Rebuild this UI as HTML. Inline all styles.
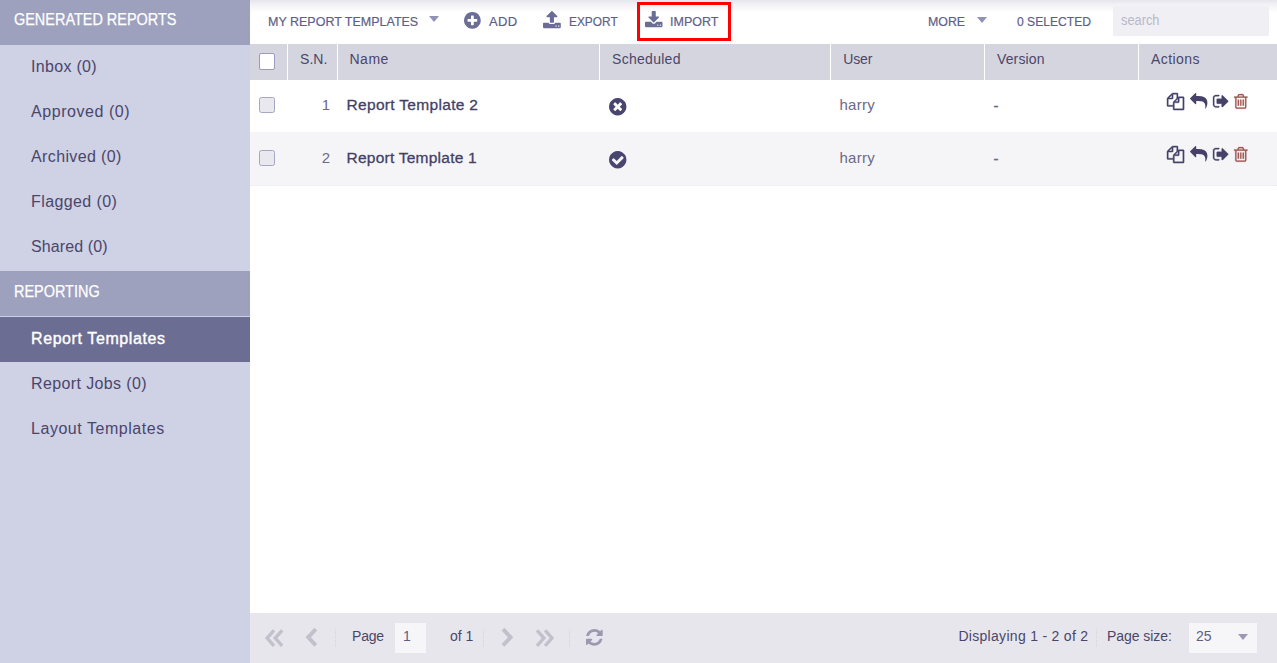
<!DOCTYPE html>
<html lang="en">
<head>
<meta charset="utf-8">
<title>Report Templates</title>
<style>
*{box-sizing:border-box;margin:0;padding:0}
html,body{width:1277px;height:663px;overflow:hidden;background:#fff}
body{font-family:"Liberation Sans",sans-serif;color:#454168;position:relative}
.abs{position:absolute;white-space:nowrap;line-height:1}
/* sidebar */
#side{position:absolute;left:0;top:0;width:250px;height:663px;background:#cfd1e5}
.shead{position:absolute;left:0;width:250px;background:#9ea1be;color:#fff;font-size:16px;-webkit-text-stroke:0.25px #fff}
.shead span{position:absolute;left:14px;white-space:nowrap;line-height:1;transform-origin:0 50%;transform:scaleX(0.903)}
.sitem{position:absolute;left:31px;font-size:16px;color:#4a466b;white-space:nowrap;line-height:1}
#sel{position:absolute;left:0;top:317px;width:250px;height:45px;background:#6b6d93}
/* toolbar */
#tbar{position:absolute;left:250px;top:0;width:1027px;height:44px;background:linear-gradient(#e5e5eb 0,#f3f3f7 5px,#fff 13px)}
.tb{transform-origin:0 50%;position:absolute;font-size:13px;color:#5d5f8a;-webkit-text-stroke:0.2px #5d5f8a;white-space:nowrap;line-height:1;top:14.5px}
.tri{position:absolute;width:0;height:0;border-left:5px solid transparent;border-right:5px solid transparent;border-top:6px solid #9092b6}
#redbox{position:absolute;left:637px;top:2px;width:94px;height:39px;border:3px solid #ff0000}
#search{position:absolute;left:1113px;top:6px;width:156px;height:30px;background:#f0eff4}
#search span{position:absolute;left:7.5px;top:6.7px;font-size:14px;color:#b8b8c9;line-height:1;transform-origin:0 50%;transform:scaleX(0.915)}
/* grid */
#ghead{position:absolute;left:250px;top:44px;width:1027px;height:36px;background:#d5d5df}
.div{position:absolute;top:44px;width:1px;height:36px;background:#fff}
.hc{position:absolute;top:52px;font-size:14px;color:#4a466b;white-space:nowrap;line-height:1}
.row{position:absolute;left:250px;width:1027px}
.cb{position:absolute;left:259px;width:16px;height:16px;border:1px solid #a4a6c4;border-radius:2.5px;background:#e8e8ee}
.cell{position:absolute;font-size:15px;white-space:nowrap;line-height:1;color:#6d6a86}
.name{color:#433f66;-webkit-text-stroke:0.3px #433f66}
svg{position:absolute;overflow:visible}
/* footer */
#foot{position:absolute;left:250px;top:613px;width:1027px;height:50px;background:#e7e6ed}
.ft{position:absolute;font-size:14px;color:#4a466b;white-space:nowrap;line-height:1;top:629px}
.sep{position:absolute;top:630px;width:0;height:17px;border-left:1px dotted #d4d3dc}
.inp{position:absolute;top:623px;height:30px;background:#f6f6f9}
</style>
</head>
<body>
<!-- SIDEBAR -->
<div id="side">
  <div class="shead" style="top:0;height:45px"><span id="sh1" style="top:11.9px">GENERATED REPORTS</span></div>
  <div class="sitem" id="si1" style="letter-spacing:0.31px;top:58.6px">Inbox (0)</div>
  <div class="sitem" id="si2" style="letter-spacing:0.56px;top:103.6px">Approved (0)</div>
  <div class="sitem" id="si3" style="letter-spacing:0.38px;top:148.6px">Archived (0)</div>
  <div class="sitem" id="si4" style="letter-spacing:0.40px;top:193.6px">Flagged (0)</div>
  <div class="sitem" id="si5" style="letter-spacing:0.10px;top:238.6px">Shared (0)</div>
  <div class="shead" style="top:271px;height:45px"><span id="sh2" style="top:13.4px;left:13.5px">REPORTING</span></div>
  <div id="sel"></div>
  <div class="sitem" id="si6" style="letter-spacing:0.59px;top:330.6px;color:#fff;-webkit-text-stroke:0.4px #fff">Report Templates</div>
  <div class="sitem" id="si7" style="letter-spacing:0.38px;top:375.6px">Report Jobs (0)</div>
  <div class="sitem" id="si8" style="letter-spacing:0.54px;top:420.6px">Layout Templates</div>
</div>

<!-- TOOLBAR -->
<div id="tbar"></div>
<div class="tb" id="t1" style="left:268px;transform:scaleX(0.961)">MY REPORT TEMPLATES</div>
<div class="tri" style="left:429px;top:16.3px"></div>
<div class="tb" id="t2" style="letter-spacing:0.4px;left:489px">ADD</div>
<div class="tb" id="t3" style="left:568.5px;transform:scaleX(0.915)">EXPORT</div>
<div id="redbox"></div>
<div class="tb" id="t4" style="left:670px;transform:scaleX(0.962)">IMPORT</div>
<div class="tb" id="t5" style="left:927.5px;transform:scaleX(0.952)">MORE</div>
<div class="tri" style="left:976.5px;top:16.5px"></div>
<div class="tb" id="t6" style="left:1016.5px;transform:scaleX(0.932)">0 SELECTED</div>
<div id="search"><span>search</span></div>

<!-- GRID HEADER -->
<div id="ghead"></div>
<div class="div" style="left:287px"></div>
<div class="div" style="left:337px"></div>
<div class="div" style="left:599px"></div>
<div class="div" style="left:830px"></div>
<div class="div" style="left:984px"></div>
<div class="div" style="left:1138px"></div>
<div class="cb" style="top:53px;height:17px;background:#fff;border-color:#9a9cbe;border-radius:2px"></div>
<div class="hc" id="h1" style="letter-spacing:0.07px;left:300px">S.N.</div>
<div class="hc" id="h2" style="letter-spacing:0.55px;left:349.4px">Name</div>
<div class="hc" id="h3" style="letter-spacing:0.29px;left:612px">Scheduled</div>
<div class="hc" id="h4" style="letter-spacing:-0.17px;left:843.3px">User</div>
<div class="hc" id="h5" style="letter-spacing:0.13px;left:997px">Version</div>
<div class="hc" id="h6" style="letter-spacing:0.44px;left:1151px">Actions</div>

<!-- ROWS -->
<div class="row" style="top:80px;height:52px;background:#fff"></div>
<div class="row" style="top:132px;height:54px;background:#f5f5f8;border-bottom:1px dotted #e7e7ec"></div>
<div class="cb" style="top:97px"></div>
<div class="cb" style="top:150px"></div>
<div class="cell" id="n1" style="left:300px;width:30px;text-align:right;top:97px">1</div>
<div class="cell" id="n2" style="left:300px;width:30px;text-align:right;top:150px">2</div>
<div class="cell name" id="r1" style="letter-spacing:0.32px;left:346.5px;top:96.7px;font-size:15.5px">Report Template 2</div>
<div class="cell name" id="r2" style="letter-spacing:0.24px;left:346.5px;top:149.7px;font-size:15.5px">Report Template 1</div>
<div class="cell" id="u1" style="letter-spacing:0.32px;left:839.4px;top:97px">harry</div>
<div class="cell" id="u2" style="letter-spacing:0.32px;left:839.4px;top:150px">harry</div>
<div class="cell" id="v1" style="left:993.5px;top:97.5px;-webkit-text-stroke:0.4px #6d6a86">-</div>
<div class="cell" id="v2" style="left:993.5px;top:150.5px;-webkit-text-stroke:0.4px #6d6a86">-</div>

<!-- FOOTER -->
<div id="foot"></div>
<div class="sep" style="left:335px"></div>
<div class="ft" id="f1" style="left:352px;letter-spacing:-0.2px">Page</div>
<div class="inp" style="left:395px;width:31px"></div>
<div class="ft" id="f2" style="left:403px;color:#5f5d84">1</div>
<div class="ft" id="f3" style="left:450px">of 1</div>
<div class="sep" style="left:483px"></div>
<div class="sep" style="left:569px"></div>
<div class="ft" id="f4" style="left:958.4px;letter-spacing:0.3px">Displaying 1 - 2 of 2</div>
<div class="sep" style="left:1096px"></div>
<div class="ft" id="f5" style="left:1107px;letter-spacing:-0.05px">Page size:</div>
<div class="inp" style="left:1189px;width:68px"></div>
<div class="ft" id="f6" style="left:1196px;color:#5f5d84">25</div>
<div class="tri" style="left:1238px;top:634px;border-left-width:5.5px;border-right-width:5.5px;border-top-width:6px;border-top-color:#9c9ab2"></div>
<svg style="left:260px;top:620px" width="360" height="40" viewBox="260 620 360 40" fill="none" stroke="#c2c1cb" stroke-linejoin="miter" stroke-linecap="butt">
<polyline stroke-width="3.3" points="274,630.3 267.1,638.1 274,645.9"/>
<polyline stroke-width="3.3" points="282.1,630.3 275.2,638.1 282.1,645.9"/>
<polyline stroke-width="3.9" points="315.8,629.2 308.2,637.3 315.8,645.4"/>
<polyline stroke-width="3.9" points="503,629.2 510.6,637.3 503,645.4"/>
<polyline stroke-width="3.3" points="537,630.3 543.9,638.1 537,645.9"/>
<polyline stroke-width="3.3" points="545.1,630.3 552,638.1 545.1,645.9"/>
</svg>
<!-- ICONS -->
<svg style="left:464.12px;top:12.38px" width="16.75" height="16.75" viewBox="128 128 1536 1536"><path fill="#6b6d96" d="M1344 960v-128q0-26-19-45t-45-19h-256v-256q0-26-19-45t-45-19h-128q-26 0-45 19t-19 45v256h-256q-26 0-45 19t-19 45v128q0 26 19 45t45 19h256v256q0 26 19 45t45 19h128q26 0 45-19t19-45v-256h256q26 0 45-19t19-45zm320-64q0 209-103 385.500t-279.500 279.500-385.500 103-385.500-103-279.500-279.500-103-385.500 103-385.500 279.500-279.500 385.500-103 385.500 103 279.500 279.500 103 385.500z"/></svg>
<svg style="left:542.93px;top:11.48px" width="17.83" height="17.15" viewBox="64 64 1664 1600"><path fill="#6b6d96" d="M1344 1472q0-26-19-45t-45-19-45 19-19 45 19 45 45 19 45-19 19-45zm256 0q0-26-19-45t-45-19-45 19-19 45 19 45 45 19 45-19 19-45zm128-224v320q0 40-28 68t-68 28h-1472q-40 0-68-28t-28-68v-320q0-40 28-68t68-28h427q21 56 70.500 92t110.500 36h256q61 0 110.500-36t70.500-92h427q40 0 68 28t28 68zm-325-648q-17 40-59 40h-256v448q0 26-19 45t-45 19h-256q-26 0-45-19t-19-45v-448h-256q-42 0-59-40-17-39 14-69l448-448q18-19 45-19t45 19l448 448q31 30 14 69z"/></svg>
<svg style="left:644.64px;top:11.07px" width="17.51" height="16.17" viewBox="64 0 1664 1536"><path fill="#6b6d96" d="M1344 1344q0-26-19-45t-45-19-45 19-19 45 19 45 45 19 45-19 19-45zm256 0q0-26-19-45t-45-19-45 19-19 45 19 45 45 19 45-19 19-45zm128-224v320q0 40-28 68t-68 28h-1472q-40 0-68-28t-28-68v-320q0-40 28-68t68-28h465l135 136q58 56 136 56t136-56l136-136h464q40 0 68 28t28 68zm-325-569q17 41-14 70l-448 448q-18 19-45 19t-45-19l-448-448q-31-29-14-70 17-39 59-39h256v-448q0-26 19-45t45-19h256q26 0 45 19t19 45v448h256q42 0 59 39z"/></svg>
<svg style="left:609.42px;top:97.57px" width="17.45" height="17.45" viewBox="128 128 1536 1536"><path fill="#48456f" d="M1277 1122q0-26-19-45l-181-181 181-181q19-19 19-45 0-27-19-46l-90-90q-19-19-46-19-26 0-45 19l-181 181-181-181q-19-19-45-19-27 0-46 19l-90 90q-19 19-19 46 0 26 19 45l181 181-181 181q-19 19-19 45 0 27 19 46l90 90q19 19 46 19 26 0 45-19l181-181 181 181q19 19 45 19 27 0 46-19l90-90q19-19 19-46zm387-226q0 209-103 385.500t-279.500 279.500-385.500 103-385.500-103-279.500-279.500-103-385.500 103-385.500 279.500-279.500 385.500-103 385.500 103 279.500 279.500 103 385.500z"/></svg>
<svg style="left:609.42px;top:150.58px" width="17.45" height="17.45" viewBox="128 128 1536 1536"><path fill="#48456f" d="M1412 734q0-28-18-46l-91-90q-19-19-45-19t-45 19l-408 407-226-226q-19-19-45-19t-45 19l-91 90q-18 18-18 46 0 27 18 45l362 362q19 19 45 19 27 0 46-19l543-543q18-18 18-45zm252 162q0 209-103 385.500t-279.500 279.500-385.500 103-385.500-103-279.500-279.500-103-385.500 103-385.500 279.500-279.500 385.500-103 385.500 103 279.500 279.500 103 385.500z"/></svg>
<svg style="left:1167.45px;top:92.55px" width="17.10" height="17.10" viewBox="0 0 1792 1792"><path fill="#454168" stroke="#454168" stroke-width="45" d="M1696 384q40 0 68 28t28 68v1216q0 40-28 68t-68 28h-960q-40 0-68-28t-28-68v-288h-544q-40 0-68-28t-28-68v-672q0-40 20-88t48-76l408-408q28-28 76-48t88-20h416q40 0 68 28t28 68v328q68-40 128-40h416zm-544 213l-299 299h299v-299zm-640-384l-299 299h299v-299zm196 647l316-316v-416h-384v416q0 40-28 68t-68 28h-416v640h512v-256q0-40 20-88t48-76zm956 804v-1152h-384v416q0 40-28 68t-68 28h-416v640h896z"/></svg>
<svg style="left:1189.89px;top:93.22px" width="17.42" height="15.56" viewBox="0 64 1792 1600"><path fill="#454168" d="M1792 1120q0 166-127 451-3 7-10.500 24t-13.500 30-13 22q-12 17-28 17-15 0-23.500-10t-8.500-25q0-9 2.500-26.500t2.500-23.500q5-68 5-123 0-101-17.500-181t-48.500-138.500-80-101-105.500-69.500-133-42.500-154-21.500-175.500-6h-224v256q0 26-19 45t-45 19-45-19l-512-512q-19-19-19-45t19-45l512-512q19-19 45-19t45 19 19 45v256h224q713 0 875 403 53 134 53 333z"/></svg>
<svg style="left:1213.15px;top:95.14px" width="15.21" height="12.41" viewBox="64 256 1568 1280"><path fill="#454168" stroke="#454168" stroke-width="35" d="M704 1440q0 4 1 20t.5 26.500-3 23.500-10 19.500-20.500 6.500h-320q-119 0-203.500-84.500t-84.500-203.500v-704q0-119 84.500-203.500t203.500-84.500h320q13 0 22.500 9.500t9.500 22.500q0 4 1 20t.5 26.500-3 23.500-10 19.500-20.500 6.500h-320q-66 0-113 47t-47 113v704q0 66 47 113t113 47h312l11.500 1 11.500 3 8 5.500 7 9 2 13.500zm928-544q0 26-19 45l-544 544q-19 19-45 19t-45-19-19-45v-288h-448q-26 0-45-19t-19-45v-384q0-26 19-45t45-19h448v-288q0-26 19-45t45-19 45 19l544 544q19 19 19 45z"/></svg>
<svg style="left:1234.31px;top:93.89px" width="13.58" height="14.82" viewBox="192 128 1408 1536"><path fill="#9d544d" stroke="#9d544d" stroke-width="22" d="M704 736v576q0 14-9 23t-23 9h-64q-14 0-23-9t-9-23v-576q0-14 9-23t23-9h64q14 0 23 9t9 23zm256 0v576q0 14-9 23t-23 9h-64q-14 0-23-9t-9-23v-576q0-14 9-23t23-9h64q14 0 23 9t9 23zm256 0v576q0 14-9 23t-23 9h-64q-14 0-23-9t-9-23v-576q0-14 9-23t23-9h64q14 0 23 9t9 23zm128 724v-948h-896v948q0 22 7 40.500t14.500 27 10.500 8.500h832q3 0 10.500-8.500t14.500-27 7-40.500zm-672-1076h448l-48-117q-7-9-17-11h-317q-10 2-17 11zm928 32v64q0 14-9 23t-23 9h-96v948q0 83-47 143.500t-113 60.500h-832q-66 0-113-58.500t-47-141.500v-952h-96q-14 0-23-9t-9-23v-64q0-14 9-23t23-9h309l70-167q15-37 54-63t79-26h320q40 0 79 26t54 63l70 167h309q14 0 23 9t9 23z"/></svg>
<svg style="left:1167.45px;top:145.55px" width="17.10" height="17.10" viewBox="0 0 1792 1792"><path fill="#454168" stroke="#454168" stroke-width="45" d="M1696 384q40 0 68 28t28 68v1216q0 40-28 68t-68 28h-960q-40 0-68-28t-28-68v-288h-544q-40 0-68-28t-28-68v-672q0-40 20-88t48-76l408-408q28-28 76-48t88-20h416q40 0 68 28t28 68v328q68-40 128-40h416zm-544 213l-299 299h299v-299zm-640-384l-299 299h299v-299zm196 647l316-316v-416h-384v416q0 40-28 68t-68 28h-416v640h512v-256q0-40 20-88t48-76zm956 804v-1152h-384v416q0 40-28 68t-68 28h-416v640h896z"/></svg>
<svg style="left:1189.89px;top:146.22px" width="17.42" height="15.56" viewBox="0 64 1792 1600"><path fill="#454168" d="M1792 1120q0 166-127 451-3 7-10.500 24t-13.500 30-13 22q-12 17-28 17-15 0-23.500-10t-8.500-25q0-9 2.500-26.500t2.500-23.500q5-68 5-123 0-101-17.500-181t-48.500-138.500-80-101-105.500-69.500-133-42.500-154-21.500-175.500-6h-224v256q0 26-19 45t-45 19-45-19l-512-512q-19-19-19-45t19-45l512-512q19-19 45-19t45 19 19 45v256h224q713 0 875 403 53 134 53 333z"/></svg>
<svg style="left:1213.15px;top:148.14px" width="15.21" height="12.41" viewBox="64 256 1568 1280"><path fill="#454168" stroke="#454168" stroke-width="35" d="M704 1440q0 4 1 20t.5 26.500-3 23.500-10 19.500-20.500 6.500h-320q-119 0-203.500-84.500t-84.500-203.500v-704q0-119 84.500-203.500t203.500-84.500h320q13 0 22.500 9.500t9.500 22.500q0 4 1 20t.5 26.500-3 23.500-10 19.500-20.500 6.500h-320q-66 0-113 47t-47 113v704q0 66 47 113t113 47h312l11.500 1 11.500 3 8 5.500 7 9 2 13.500zm928-544q0 26-19 45l-544 544q-19 19-45 19t-45-19-19-45v-288h-448q-26 0-45-19t-19-45v-384q0-26 19-45t45-19h448v-288q0-26 19-45t45-19 45 19l544 544q19 19 19 45z"/></svg>
<svg style="left:1234.31px;top:146.89px" width="13.58" height="14.82" viewBox="192 128 1408 1536"><path fill="#9d544d" stroke="#9d544d" stroke-width="22" d="M704 736v576q0 14-9 23t-23 9h-64q-14 0-23-9t-9-23v-576q0-14 9-23t23-9h64q14 0 23 9t9 23zm256 0v576q0 14-9 23t-23 9h-64q-14 0-23-9t-9-23v-576q0-14 9-23t23-9h64q14 0 23 9t9 23zm256 0v576q0 14-9 23t-23 9h-64q-14 0-23-9t-9-23v-576q0-14 9-23t23-9h64q14 0 23 9t9 23zm128 724v-948h-896v948q0 22 7 40.500t14.500 27 10.500 8.500h832q3 0 10.500-8.500t14.500-27 7-40.500zm-672-1076h448l-48-117q-7-9-17-11h-317q-10 2-17 11zm928 32v64q0 14-9 23t-23 9h-96v948q0 83-47 143.500t-113 60.500h-832q-66 0-113-58.500t-47-141.500v-952h-96q-14 0-23-9t-9-23v-64q0-14 9-23t23-9h309l70-167q15-37 54-63t79-26h320q40 0 79 26t54 63l70 167h309q14 0 23 9t9 23z"/></svg>
<svg style="left:585.55px;top:629.25px" width="16.70" height="16.70" viewBox="128 128 1536 1536"><path fill="#9b99b0" d="M1639 1056q0 5-1 7-64 268-268 434.500t-478 166.500q-146 0-282.500-55t-243.500-157l-129 129q-19 19-45 19t-45-19-19-45v-448q0-26 19-45t45-19h448q26 0 45 19t19 45-19 45l-137 137q71 66 161 102t187 36q134 0 250-65t186-179q11-17 53-117 8-23 30-23h192q13 0 22.500 9.500t9.500 22.500zm25-800v448q0 26-19 45t-45 19h-448q-26 0-45-19t-19-45 19-45l138-138q-148-137-349-137-134 0-250 65t-186 179q-11 17-53 117-8 23-30 23h-199q-13 0-22.500-9.500t-9.500-22.500v-7q65-268 270-434.500t480-166.500q146 0 284 55.500t245 156.500l130-129q19-19 45-19t45 19 19 45z"/></svg>
<!-- /ICONS -->
</body>
</html>
